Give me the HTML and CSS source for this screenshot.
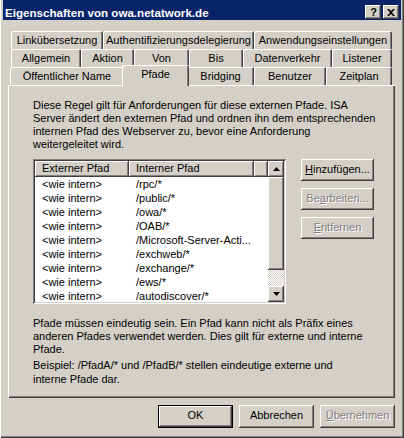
FILE: index.html
```html
<!DOCTYPE html>
<html lang="de">
<head>
<meta charset="utf-8">
<title>Eigenschaften von owa.netatwork.de</title>
<link rel="stylesheet" href="styles.css">
</head>
<body>
<div class="window">
  <div class="titlebar">
    <span class="title">Eigenschaften von owa.netatwork.de</span>
    <div class="tbtns">
      <span class="tbtn help">?</span>
      <span class="tbtn"><svg width="8" height="7" viewBox="0 0 8 7"><path d="M0 0h2l2 2 2-2h2l-3 3.5 3 3.5h-2l-2-2-2 2h-2l3-3.5z" fill="#000"/></svg></span>
    </div>
  </div>

  <div class="tabs">
    <div class="row r1">
      <div class="tab">Linkübersetzung</div>
      <div class="tab">Authentifizierungsdelegierung</div>
      <div class="tab">Anwendungseinstellungen</div>
    </div>
    <div class="row r2">
      <div class="tab">Allgemein</div>
      <div class="tab">Aktion</div>
      <div class="tab">Von</div>
      <div class="tab">Bis</div>
      <div class="tab">Datenverkehr</div>
      <div class="tab">Listener</div>
    </div>
    <div class="row r3">
      <div class="tab">Öffentlicher Name</div>
      <div class="tab active">Pfade</div>
      <div class="tab">Bridging</div>
      <div class="tab">Benutzer</div>
      <div class="tab">Zeitplan</div>
    </div>
  </div>

  <div class="panel">
    <p class="desc">Diese Regel gilt für Anforderungen für diese externen Pfade. ISA<br>Server ändert den externen Pfad und ordnen ihn dem entsprechenden<br>internen Pfad des Webserver zu, bevor eine Anforderung<br>weitergeleitet wird.</p>

    <div class="mid">
      <div class="listview">
        <div class="lv-main">
          <div class="lv-head">
            <div class="hc c1">Externer Pfad</div>
            <div class="hc c2">Interner Pfad</div>
            <div class="hc c3"></div>
          </div>
          <div class="lv-row"><span class="lc1">&lt;wie intern&gt;</span><span class="lc2">/rpc/*</span></div>
          <div class="lv-row"><span class="lc1">&lt;wie intern&gt;</span><span class="lc2">/public/*</span></div>
          <div class="lv-row"><span class="lc1">&lt;wie intern&gt;</span><span class="lc2">/owa/*</span></div>
          <div class="lv-row"><span class="lc1">&lt;wie intern&gt;</span><span class="lc2">/OAB/*</span></div>
          <div class="lv-row"><span class="lc1">&lt;wie intern&gt;</span><span class="lc2">/Microsoft-Server-Acti...</span></div>
          <div class="lv-row"><span class="lc1">&lt;wie intern&gt;</span><span class="lc2">/exchweb/*</span></div>
          <div class="lv-row"><span class="lc1">&lt;wie intern&gt;</span><span class="lc2">/exchange/*</span></div>
          <div class="lv-row"><span class="lc1">&lt;wie intern&gt;</span><span class="lc2">/ews/*</span></div>
          <div class="lv-row"><span class="lc1">&lt;wie intern&gt;</span><span class="lc2">/autodiscover/*</span></div>
        </div>
        <div class="vscroll">
          <div class="sb-btn"><svg width="7" height="4" viewBox="0 0 7 4"><path d="M3.5 0L7 4H0z" fill="#000"/></svg></div>
          <div class="sb-thumb"></div>
          <div class="sb-track"></div>
          <div class="sb-btn"><svg width="7" height="4" viewBox="0 0 7 4"><path d="M0 0h7L3.5 4z" fill="#000"/></svg></div>
        </div>
      </div>
      <div class="side-btns">
        <div class="btn"><u>H</u>inzufügen...</div>
        <div class="btn disabled">Be<u>a</u>rbeiten...</div>
        <div class="btn disabled"><u>E</u>ntfernen</div>
      </div>
    </div>

    <p class="note">Pfade müssen eindeutig sein. Ein Pfad kann nicht als Präfix eines<br>anderen Pfades verwendet werden. Dies gilt für externe und interne<br>Pfade.</p>
    <p class="note2">Beispiel: /PfadA/* und /PfadB/* stellen eindeutige externe und<br>interne Pfade dar.</p>
  </div>

  <div class="footer">
    <div class="btn fbtn default">OK</div>
    <div class="btn fbtn">Abbrechen</div>
    <div class="btn fbtn disabled"><u>Ü</u>bernehmen</div>
  </div>
</div>
</body>
</html>
```

FILE: styles.css
```css
* { box-sizing: border-box; }

body {
  margin: 0;
  background: #d4d0c8;
  font-family: "Liberation Sans", Arial, sans-serif;
  font-size: 11px;
  color: #000;
}

.window {
  width: 404px;
  height: 438px;
  background: #d4d0c8;
  overflow: hidden;
  box-shadow: inset 1px 0 #fff, inset -1px -1px #404040, inset -2px -2px #808080;
}

.titlebar {
  margin: 0 3px;
  height: 20px;
  background: #0a246a;
  display: flex;
  justify-content: space-between;
  align-items: flex-start;
  padding: 0 2px 0 2px;
}

.title {
  color: #fff;
  font-weight: bold;
  font-size: 11.6px;
  line-height: 13px;
  margin-top: 6px;
}

.tbtns {
  display: flex;
  gap: 2px;
  margin-top: 5px;
}

.tbtn {
  width: 16px;
  height: 14px;
  background: #d4d0c8;
  box-shadow: inset -1px -1px #404040, inset 1px 1px #fff, inset -2px -2px #808080;
  display: flex;
  align-items: center;
  justify-content: center;
  font-weight: bold;
  font-size: 11px;
  line-height: 12px;
}

.tbtn.help { padding-left: 1px; }

.tabs { margin-top: 11px; }

.row {
  display: flex;
  height: 18px;
  align-items: flex-start;
}

.r1, .r2 { margin-left: 11px; }
.r3 { margin-left: 10px; }

.tab {
  height: 18px;
  line-height: 17px;
  text-align: center;
  white-space: nowrap;
  background: #d4d0c8;
  border-radius: 2px 2px 0 0;
  box-shadow: inset 1px 1px #fff, inset -1px 0 #404040, inset -2px 0 #808080;
  padding-top: 1px;
}

.r1 .tab:nth-child(1) { width: 92px; }
.r1 .tab:nth-child(2) { width: 151px; }
.r1 .tab:nth-child(3) { width: 138px; }

.r2 .tab:nth-child(1) { width: 70px; }
.r2 .tab:nth-child(2) { width: 53px; }
.r2 .tab:nth-child(3) { width: 55px; }
.r2 .tab:nth-child(4) { width: 54px; }
.r2 .tab:nth-child(5) { width: 89px; }
.r2 .tab:nth-child(6) { width: 60px; }

.r3 .tab:nth-child(1) { width: 114px; }
.r3 .tab:nth-child(2) { width: 67px; }
.r3 .tab:nth-child(3) { width: 67px; }
.r3 .tab:nth-child(4) { width: 72px; }
.r3 .tab:nth-child(5) { width: 66px; }

.tab.active {
  position: relative;
  z-index: 2;
  height: 21px;
  margin: -2px -2px -1px;
  padding-top: 0;
  line-height: 18px;
  box-shadow: inset 1px 1px #fff, inset -1px 0 #404040, inset -2px 0 #808080;
}

.panel {
  margin-left: 8px;
  width: 387px;
  height: 313px;
  box-shadow: inset 1px 1px #fff, inset -1px -1px #404040, inset -2px -2px #808080;
  padding: 14px 0 0 25px;
}

.desc, .note, .note2 {
  margin: 0;
  line-height: 13px;
  white-space: nowrap;
}

.mid {
  display: flex;
  gap: 15px;
  margin-top: 8px;
}

.listview {
  width: 253px;
  height: 145px;
  background: #fff;
  padding: 2px;
  display: flex;
  box-shadow: inset 1px 1px #808080, inset -1px -1px #fff, inset 2px 2px #404040, inset -2px -2px #d4d0c8;
}

.lv-main {
  flex: 1;
  overflow: hidden;
}

.lv-head {
  display: flex;
  height: 16px;
}

.hc {
  height: 16px;
  background: #d4d0c8;
  line-height: 15px;
  padding-left: 7px;
  box-shadow: inset -1px -1px #404040, inset 1px 1px #fff, inset -2px -2px #808080;
}

.c1 { width: 94px; }
.c2 { width: 125px; }
.c3 { flex: 1; }

.lv-row {
  display: flex;
  height: 14px;
  line-height: 14px;
  white-space: nowrap;
}

.lc1 { width: 94px; padding-left: 7px; }
.lc2 { padding-left: 7px; }

.vscroll {
  width: 16px;
  display: flex;
  flex-direction: column;
}

.sb-btn, .sb-thumb {
  background: #d4d0c8;
  box-shadow: inset -1px -1px #404040, inset 1px 1px #fff, inset -2px -2px #808080;
}

.sb-btn {
  height: 16px;
  display: flex;
  align-items: center;
  justify-content: center;
}

.sb-thumb { height: 93px; }

.sb-track {
  flex: 1;
  background: repeating-conic-gradient(#fff 0 25%, #d4d0c8 0 50%) 0 0 / 2px 2px;
}

.side-btns {
  display: flex;
  flex-direction: column;
  gap: 7px;
}

.btn {
  width: 73px;
  height: 22px;
  line-height: 21px;
  text-align: center;
  background: #d4d0c8;
  box-shadow: inset -1px -1px #404040, inset 1px 1px #fff, inset -2px -2px #808080;
  white-space: nowrap;
}

.btn.disabled {
  color: #808080;
  text-shadow: 1px 1px #fff;
}

.note { margin-top: 13px; }
.note2 { margin-top: 2px; line-height: 14px; }

.footer {
  display: flex;
  justify-content: flex-end;
  gap: 6px;
  margin-top: 7px;
  padding-right: 9px;
}

.fbtn { width: 75px; height: 23px; }

.fbtn.default {
  border: 1px solid #000;
  line-height: 19px;
}
```
